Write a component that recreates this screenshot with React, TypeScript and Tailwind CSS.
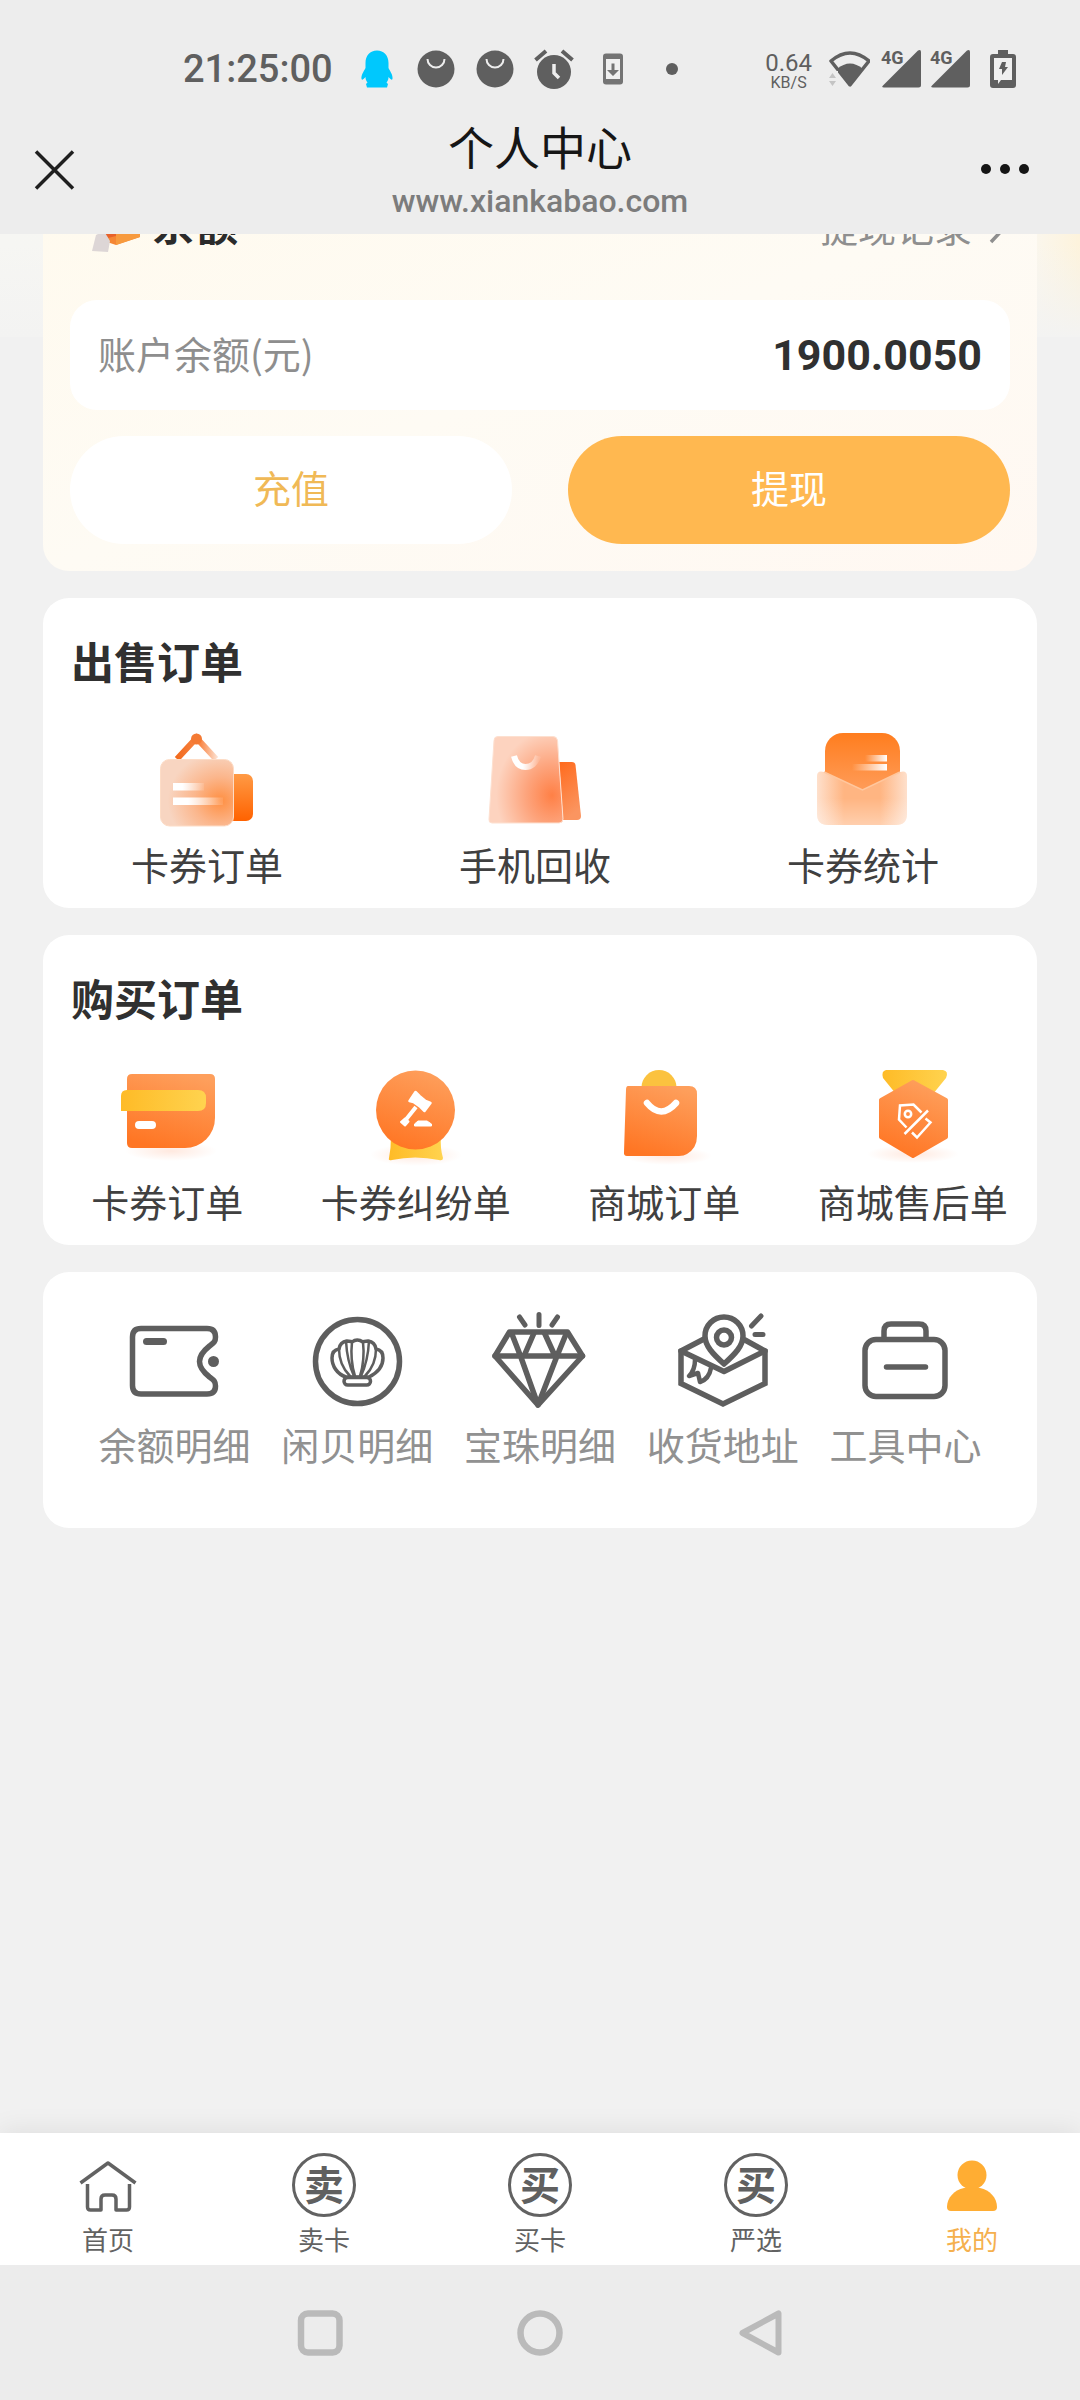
import type { ReactNode } from "react";

const Stop = ({ o, c, a = 1 }: { o: number; c: string; a?: number }) => (
  <stop offset={o} stopColor={c} stopOpacity={a} />
);

const TileSvg = ({ children }: { children: ReactNode }) => (
  <svg viewBox="0 0 96 96" className="size-24 overflow-visible" fill="none" aria-hidden="true">
    {children}
  </svg>
);

/* ---------- sell orders ---------- */

const SignIcon = () => (
  <TileSvg>
    <defs>
      <linearGradient id="sg1" x1="0" y1="0" x2="0" y2="1">
        <Stop o={0} c="#ff9a45" />
        <Stop o={1} c="#ff6200" />
      </linearGradient>
      <radialGradient id="sg2" cx="0.82" cy="0.62" r="0.72">
        <Stop o={0} c="#ff8f42" />
        <Stop o={0.5} c="#fbb68c" />
        <Stop o={1} c="#f8d5c1" />
      </radialGradient>
      <linearGradient id="sg3" gradientUnits="userSpaceOnUse" x1="18" y1="0" x2="58" y2="0">
        <Stop o={0} c="#f26a1d" />
        <Stop o={0.6} c="#f9894a" />
        <Stop o={1} c="#fde0cf" />
      </linearGradient>
      <linearGradient id="sg4">
        <Stop o={0.3} c="#fff" />
        <Stop o={1} c="#fff" a={0.1} />
      </linearGradient>
    </defs>
    <path d="M18 27L37.500 6L57 27" stroke="url(#sg3)" strokeWidth="6" />
    <circle cx="37.500" cy="7" r="5.500" fill="#f47a34" />
    <path d="M70 42h17a7 7 0 0 1 7 7v33a7 7 0 0 1-7 7H70z" fill="url(#sg1)" />
    <rect x="1.500" y="27.500" width="73" height="66.500" rx="9" fill="url(#sg2)" stroke="#fddcc6" />
    <rect x="14" y="51" width="31" height="7.500" fill="url(#sg4)" />
    <rect x="14" y="65.500" width="50" height="7.500" fill="url(#sg4)" />
  </TileSvg>
);

const PhoneBagIcon = () => (
  <TileSvg>
    <defs>
      <linearGradient id="pb1" x1="0" y1="0" x2="0.300" y2="1">
        <Stop o={0} c="#ff6a1c" />
        <Stop o={1} c="#fb9560" />
      </linearGradient>
      <radialGradient id="pb2" cx="0.85" cy="0.68" r="0.75">
        <Stop o={0} c="#ff8046" />
        <Stop o={0.45} c="#fda37b" />
        <Stop o={1} c="#fdd3bf" />
      </radialGradient>
      <linearGradient id="pb3" gradientUnits="userSpaceOnUse" x1="25" y1="0" x2="52" y2="0">
        <Stop o={0.4} c="#fff" />
        <Stop o={1} c="#fff" a={0.1} />
      </linearGradient>
    </defs>
    <path d="M72 30h13q3 0 3.500 3l5.500 51q0 4-4 4H76z" fill="url(#pb1)" />
    <path d="M11 4.500h55q4 0 4.500 4L76 87q0 4-4 4H5q-3.500 0-3-4L7 8.500q0-4 4-4z" fill="url(#pb2)" stroke="#fde0d0" />
    <path d="M27 24c2 8 6 11 11.500 11S49 31 51 24" stroke="url(#pb3)" strokeWidth="6" />
  </TileSvg>
);

const EnvelopeIcon = () => (
  <TileSvg>
    <defs>
      <linearGradient id="en1" x1="0" y1="0" x2="0" y2="1">
        <Stop o={0} c="#ff7d1e" />
        <Stop o={1} c="#ffa468" />
      </linearGradient>
      <linearGradient id="en2">
        <Stop o={0} c="#fee0cc" />
        <Stop o={0.3} c="#ffb582" />
        <Stop o={0.7} c="#ffb582" />
        <Stop o={1} c="#fee0cc" />
      </linearGradient>
      <linearGradient id="en3">
        <Stop o={0} c="#fff" a={0} />
        <Stop o={1} c="#fff" />
      </linearGradient>
      <linearGradient id="en4" x1="0" y1="0" x2="0" y2="1">
        <Stop o={0.5} c="#fff" a={0} />
        <Stop o={1} c="#fff" a={0.35} />
      </linearGradient>
    </defs>
    <rect x="10" y="1" width="75" height="72" rx="18" fill="url(#en1)" />
    <rect x="50" y="23" width="22" height="6.500" fill="url(#en3)" />
    <rect x="37" y="32" width="35" height="6.500" fill="url(#en3)" />
    <path d="M2 44q0-6 7-4l38.500 18L85 40q7-2 7 4v38q0 11-11 11H13Q2 93 2 82z" fill="url(#en2)" />
    <path d="M2 44q0-6 7-4l38.500 18L85 40q7-2 7 4v38q0 11-11 11H13Q2 93 2 82z" fill="url(#en4)" />
    <path d="M9 40l38.500 18L85 40" stroke="#ffc79e" strokeWidth="1.500" />
  </TileSvg>
);

/* ---------- buy orders ---------- */

const BuyDefs = () => (
  <svg width="0" height="0" className="absolute" aria-hidden="true">
    <defs>
      <linearGradient id="or1" x1="0.7" y1="0" x2="0.35" y2="1">
        <Stop o={0} c="#fe9f5c" />
        <Stop o={1} c="#ff7624" />
      </linearGradient>
      <linearGradient id="ye1" x1="0" y1="0" x2="1" y2="0">
        <Stop o={0} c="#febb27" />
        <Stop o={1} c="#ffd34f" />
      </linearGradient>
      <radialGradient id="sh1">
        <Stop o={0} c="#ff9060" a={0.2} />
        <Stop o={1} c="#ff9060" a={0} />
      </radialGradient>
    </defs>
  </svg>
);

const CardIcon = () => (
  <TileSvg>
    <ellipse cx="52" cy="82" rx="46" ry="10" fill="url(#sh1)" />
    <path d="M13 5h78q5 0 5 5v39a30 30 0 0 1-30 30H13q-5 0-5-5V10q0-5 5-5z" fill="url(#or1)" />
    <path d="M8 21h71q8 0 8 8v5q0 8-8 8H2V27q0-6 6-6z" fill="url(#ye1)" />
    <rect x="16" y="52" width="21" height="8" rx="4" fill="#fff" />
  </TileSvg>
);

const GavelIcon = () => (
  <TileSvg>
    <ellipse cx="48" cy="86" rx="46" ry="11" fill="url(#sh1)" />
    <path d="M23 67h50q-1 12 2 22 0 3-4 2-24-5-47 0-4 1-3-2 2-10 2-22z" fill="url(#ye1)" />
    <circle cx="47.500" cy="41" r="39.500" fill="url(#or1)" />
    <g fill="#fff" stroke="#fff" strokeLinejoin="round">
      <path d="M47.500 23l4 4 6 5 5 2-6 8-4-4-7-5-4-1z" strokeWidth="2.500" />
      <path d="M48 38L36 53" strokeWidth="4" />
      <path d="M37 49.500l3.500 3-3.500 4-4-3.500z" strokeWidth="2" />
      <path d="M50 52h9l4.500 3v2H46.500v-2z" strokeWidth="1" />
    </g>
  </TileSvg>
);

const BagIcon = () => (
  <TileSvg>
    <ellipse cx="52" cy="87" rx="44" ry="9" fill="url(#sh1)" />
    <circle cx="43" cy="18.500" r="17.500" fill="#fbc23f" />
    <path d="M12 17h61q8 0 8 8v42q0 12-10 18-3 2-8 2H11q-3.500 0-3-4l2-62q0-4 2-4z" fill="url(#or1)" />
    <path d="M31 34q14 17 29 0" stroke="#fff" strokeWidth="6.500" strokeLinecap="round" />
  </TileSvg>
);

const MedalIcon = () => (
  <TileSvg>
    <ellipse cx="48" cy="85" rx="46" ry="9" fill="url(#sh1)" />
    <path d="M21 1h57q6 1 3 8L68 25H31L18 9q-2-7 3-8z" fill="url(#ye1)" />
    <path
      d="M48 13l33 18v37L48 87 16 68V31z"
      fill="url(#or1)"
      stroke="url(#or1)"
      strokeWidth="4"
      strokeLinejoin="round"
    />
    <g stroke="#fff" strokeWidth="2.500">
      <path d="M41.500 58.500L34 50.500l1-14 13.500-1 8 8" />
      <circle cx="43" cy="45" r="3.200" />
      <path d="M63 41.500L39.500 65" />
      <path d="M60.500 49.500l5 4L52 68.500l-5-5" />
    </g>
  </TileSvg>
);

/* ---------- tools ---------- */

const LineSvg = ({ children }: { children: ReactNode }) => (
  <svg
    viewBox="0 0 96 96"
    className="size-24 overflow-visible"
    fill="none"
    stroke="#5e5e5e"
    strokeWidth="5.500"
    strokeLinejoin="round"
    strokeLinecap="round"
    aria-hidden="true"
  >
    {children}
  </svg>
);

const WalletIcon = () => (
  <LineSvg>
    <path d="M15 16.500h66q8.500 0 8.500 8.500c0 5-2 6-6 9-5 4-10 9-10 15.500s5 11.500 10 15.500c4 3 6 4 6 9q0 8-8.500 8H15q-8.500 0-8.500-8.500v-48.500q0-8.500 8.500-8.500z" />
    <path d="M20.500 29.500h17" strokeWidth="7" />
    <circle cx="87.500" cy="49.500" r="5.500" fill="#5e5e5e" stroke="none" />
  </LineSvg>
);

const ShellIcon = () => (
  <LineSvg>
    <circle cx="48.500" cy="49.500" r="42" />
    <g strokeWidth="3.500">
      <path d="M37 65C28 62 23 54 23 46q0-8 7-9 1-7 8-8 4 0 5 1 5-4 11 0 1-1 5-1 7 1 8 8 7 1 7 9 0 12-14 19z" />
      <rect x="35" y="65.500" width="26.500" height="7.500" rx="3.700" />
      <g strokeWidth="2.500">
        <path d="M30 37q0 16 11 27M67 37q0 16-11 27M37 29q1 20 8 35M60 29q-1 20-8 35M43 30q-2 18 3 34M54 30q2 18-3 34" />
      </g>
    </g>
  </LineSvg>
);

const DiamondIcon = () => (
  <LineSvg>
    <path d="M27.500 5l5.500 8M47 2.500v11M65.500 5L60 13" strokeWidth="5" />
    <path d="M17.500 20h58L90.500 44 46 93 3 44z" />
    <path d="M3 44h87.500M19.500 21L28.500 44 46 93 65 44l9.500-23M42 21l-10 23M52.500 21l10.500 23" />
  </LineSvg>
);

const AddressIcon = () => (
  <LineSvg>
    <path d="M29 27L6 39v32.500L48 92l42-20.500V39L70 28" strokeLinejoin="miter" />
    <path d="M6 39l43 20.500L90 39" />
    <path d="M49 52C38 42 30 34 30 24a19 19 0 0 1 38 0c0 10-8 18-19 28z" fill="#fff" />
    <circle cx="49" cy="25.500" r="7.500" />
    <path d="M20 48q0 10-6 16l9-3 2 9q9-3 11-14" strokeWidth="4.500" />
    <path d="M86 4L76.500 14M80 22.500h8" strokeWidth="5" />
  </LineSvg>
);

const ToolboxIcon = () => (
  <LineSvg>
    <rect x="7" y="27.500" width="80" height="57" rx="11" />
    <path d="M26 26.500V19q0-7 7-7h28q7 0 7 7v7.500M28.500 55h39" />
  </LineSvg>
);

/* ---------- tab bar ---------- */

const HomeIcon = () => (
  <svg viewBox="0 0 64 64" className="size-16" fill="none" stroke="#626262" strokeWidth="3.500" strokeLinejoin="round" aria-hidden="true">
    <path d="M4.500 30L32 10l27.500 20" />
    <path d="M11.500 31v23q0 3 3 3h10.500V46q0-4 4-4h7q4 0 4 4v11h10.500q3 0 3-3V31" />
  </svg>
);

const MineIcon = () => (
  <svg viewBox="0 0 64 64" className="size-16" fill="#ffad33" aria-hidden="true">
    <ellipse cx="32" cy="22" rx="14.500" ry="14.500" />
    <path d="M24 35h16c10 2 17 10 17 19q0 4-4 4H11q-4 0-4-4c0-9 7-17 17-19z" />
  </svg>
);

const RoundGlyph = ({ char }: { char: string }) => (
  <span
    className="flex size-16 items-center justify-center rounded-full border-3 border-[#626262] pb-1 text-[40px] leading-none font-bold text-[#606060]"
    aria-hidden="true"
  >
    {char}
  </span>
);

/* ---------- status bar ---------- */

const Smiley = () => (
  <svg viewBox="0 0 38 38" className="size-[38px]" fill="none" aria-hidden="true">
    <circle cx="19" cy="19" r="18.500" fill="#5f5f5f" />
    <path d="M10.500 9a8.500 8.500 0 0 0 17 0" stroke="#eee" strokeWidth="2" />
  </svg>
);

const Signal = () => (
  <span className="relative block h-[38px] w-[40px]">
    <svg viewBox="0 0 40 38" className="size-full" fill="#5f5f5f" aria-hidden="true">
      <path d="M37 0.500q3-1.500 3 1.500v33q0 2.500-2.500 2.500H3q-3 0-1-2z" />
      <path d="M0 0h22v15H0z" fill="#ededed" />
    </svg>
    <span className="absolute -top-px left-0 text-[18px] leading-none font-bold">4G</span>
  </span>
);

const StatusBar = () => (
  <div className="flex h-28 items-center justify-between pr-16 pl-[183px] font-[Roboto] text-[#5f5f5f]">
    <div className="flex items-center gap-[21px] pt-[26px]">
      <span className="mr-1 text-[38px] leading-none font-medium">21:25:00</span>
      <svg viewBox="0 0 38 38" className="size-[38px]" fill="#00c8fd" aria-hidden="true">
        <path d="M19 0.500c7 0 11.500 5 11.500 12.500v5c2 4 4.500 7 4 11-1 2-3-1-4-2 0 3-1 4-2 5.500l1.500 1.500-1 3.500H9l-1-3.500 1.500-1.500c-1-1.500-2-2.500-2-5.500-1 1-3 4-4 2-.5-4 2-7 4-11v-5C7.500 5.500 12 .5 19 .5z" />
      </svg>
      <Smiley />
      <Smiley />
      <svg viewBox="0 0 38 38" className="size-[38px] overflow-visible" fill="none" aria-hidden="true">
        <circle cx="19" cy="22" r="17" fill="#5f5f5f" />
        <path d="M0.500 10L11 1M27 1l10.500 9" stroke="#5f5f5f" strokeWidth="4" />
        <path d="M19 14v9l5 5" stroke="#eee" strokeWidth="3.500" />
      </svg>
      <svg viewBox="0 0 38 38" className="size-[38px]" fill="none" aria-hidden="true">
        <rect x="9" y="3.500" width="20" height="31" rx="3" fill="#747474" />
        <path d="M12 9h14v20H12z" fill="#f0f0f0" />
        <path d="M17.500 13.500h3V20h4.500l-6 6-6-6h4.500z" fill="#747474" />
      </svg>
      <svg viewBox="0 0 38 38" className="size-[38px]" aria-hidden="true">
        <circle cx="19" cy="19" r="6" fill="#5f5f5f" />
      </svg>
    </div>
    <div className="flex items-center pt-[26px]">
      <span className="mr-4 flex flex-col items-center pt-1">
        <span className="text-[24px] leading-6">0.64</span>
        <span className="text-base leading-4">KB/S</span>
      </span>
      <svg viewBox="0 0 42 38" className="mr-[11px] h-[38px] w-[42px]" fill="none" aria-hidden="true">
        <path d="M3 11Q22-5 41 11L22 35z" stroke="#5f5f5f" strokeWidth="3.500" strokeLinejoin="round" />
        <path d="M9 19q13-11 26 0L22 36z" fill="#5f5f5f" />
        <path d="M0 21h10v17H0z" fill="#ededed" />
        <path d="M1 28h7l-3.500-5zM1 31h7l-3.500 5z" fill="#c4c4c4" />
      </svg>
      <span className="mr-[9px]">
        <Signal />
      </span>
      <span className="mr-5">
        <Signal />
      </span>
      <svg viewBox="0 0 26 38" className="h-[38px] w-[26px]" aria-hidden="true">
        <path d="M8 0h10v4h5q3 0 3 3v28q0 3-3 3H3q-3 0-3-3V7q0-3 3-3h5z" fill="#5f5f5f" />
        <path d="M4 8h18v22H11l-3 4v-4H4z" fill="#f0f0f0" />
        <path d="M12 12h4l-1 5h3l-6 8v-6H9z" fill="#5f5f5f" />
      </svg>
    </div>
  </div>
);

const Tile = ({ icon, label }: { icon: ReactNode; label: string }) => (
  <a href="#" className="flex min-w-0 flex-1 flex-col items-center gap-2 text-[38px] leading-[56px] whitespace-nowrap text-[#404040]">
    {icon}
    {label}
  </a>
);

const LineTile = ({ icon, label }: { icon: ReactNode; label: string }) => (
  <a href="#" className="flex min-w-0 flex-1 flex-col items-center gap-2 text-[38px] leading-[56px] whitespace-nowrap text-[#919191]">
    {icon}
    {label}
  </a>
);

const tabs = [
  { label: "首页", icon: <HomeIcon /> },
  { label: "卖卡", icon: <RoundGlyph char="卖" /> },
  { label: "买卡", icon: <RoundGlyph char="买" /> },
  { label: "严选", icon: <RoundGlyph char="买" /> },
];

export default function App() {
  return (
    <div className="flex min-h-screen flex-col bg-[#f1f1f1] font-['Noto_Sans_CJK_SC',sans-serif]">
      <header className="relative z-10 bg-[#ededed]">
        <StatusBar />
        <div className="flex h-[122px] items-start justify-between px-8">
          <button type="button" aria-label="关闭" className="mt-9 w-[68px]">
            <svg viewBox="0 0 44 44" className="size-11" stroke="#1f1f1f" strokeWidth="3.500" aria-hidden="true">
              <path d="M4 3.500l37 37M41 3.500L4 40.500" />
            </svg>
          </button>
          <div className="flex flex-col items-center gap-[7px]">
            <h1 className="text-[46px] leading-[66px] text-[#161616]">个人中心</h1>
            <p className="font-[Roboto] text-[32px] leading-8 font-medium text-[#7c7c7c]">www.xiankabao.com</p>
          </div>
          <button type="button" aria-label="更多" className="mt-9 w-[68px]">
            <svg viewBox="0 0 52 44" className="h-11 w-[52px]" fill="#151515" aria-hidden="true">
              <circle cx="6" cy="21" r="5" />
              <circle cx="25" cy="21" r="5" />
              <circle cx="44" cy="21" r="5" />
            </svg>
          </button>
        </div>
      </header>

      <main className="flex flex-1 flex-col gap-[27px] overflow-hidden bg-[linear-gradient(to_bottom,rgba(241,241,241,0)_10%,#f3f3f2),linear-gradient(to_right,#f6f6f3,#faf7f0_95%,#fdf3dc)] bg-[length:100%_103px] bg-no-repeat px-[43px]">
        <section className="-mt-12 rounded-[26px] bg-[linear-gradient(to_bottom_right,#fffaee,#fefbf4_50%,#fff8f2)] px-[27px] pb-[27px]">
          <div className="flex h-[114px] items-start justify-between pt-1">
            <h2 className="flex items-center gap-3 pl-5 text-[43px] leading-[64px] font-bold text-[#2b2b2b]">
              <svg viewBox="0 0 50 54" className="mt-2 h-[54px] w-[50px]" aria-hidden="true">
                <path d="M12 12l28-4 10 6v24l-24 8-12-4z" fill="#f58634" />
                <path d="M26 22l24-6v22l-24 8z" fill="#f79a3e" />
                <path d="M6 24l20-1v14l-8 2z" fill="#e8622a" />
                <path d="M6 36l8-4 6 10-2 11-16-1z" fill="#ddd6d6" />
              </svg>
              余额
            </h2>
            <a href="#" className="flex items-center gap-4 text-[38px] leading-[72px] text-[#8f8f8f]">
              提现记录
              <svg viewBox="0 0 22 36" className="h-9 w-[22px]" fill="none" stroke="#8f8f8f" strokeWidth="3.500" aria-hidden="true">
                <path d="M3 2l15 16L3 34" />
              </svg>
            </a>
          </div>
          <div className="flex h-[110px] items-center justify-between rounded-[27px] bg-white px-7">
            <span className="pb-1 text-[38px] leading-[56px] text-[#8e8e8e]">账户余额(元)</span>
            <span className="font-[Roboto] text-[43px] leading-[56px] font-bold text-[#303030]">1900.0050</span>
          </div>
          <div className="mt-[26px] flex gap-14 text-[38px]">
            <button type="button" className="h-[108px] flex-1 rounded-full bg-white pb-2 text-[#f0b956]">
              充值
            </button>
            <button type="button" className="h-[108px] flex-1 rounded-full bg-[#ffb850] pb-2 text-white">
              提现
            </button>
          </div>
        </section>

        <section className="rounded-[26px] bg-white pt-[30px] pb-4">
          <h2 className="px-7 text-[43px] leading-[64px] font-bold text-[#303030]">出售订单</h2>
          <div className="mt-10 flex pr-[10px]">
            <Tile icon={<SignIcon />} label="卡券订单" />
            <Tile icon={<PhoneBagIcon />} label="手机回收" />
            <Tile icon={<EnvelopeIcon />} label="卡券统计" />
          </div>
        </section>

        <section className="relative rounded-[26px] bg-white pt-[30px] pb-4">
          <BuyDefs />
          <h2 className="px-7 text-[43px] leading-[64px] font-bold text-[#303030]">购买订单</h2>
          <div className="mt-10 flex">
            <Tile icon={<CardIcon />} label="卡券订单" />
            <Tile icon={<GavelIcon />} label="卡券纠纷单" />
            <Tile icon={<BagIcon />} label="商城订单" />
            <Tile icon={<MedalIcon />} label="商城售后单" />
          </div>
        </section>

        <section className="flex rounded-[26px] bg-white px-10 pt-10 pb-14">
          <LineTile icon={<WalletIcon />} label="余额明细" />
          <LineTile icon={<ShellIcon />} label="闲贝明细" />
          <LineTile icon={<DiamondIcon />} label="宝珠明细" />
          <LineTile icon={<AddressIcon />} label="收货地址" />
          <LineTile icon={<ToolboxIcon />} label="工具中心" />
        </section>
      </main>

      <nav className="flex bg-white pt-5 pb-2 shadow-[0_-4px_24px_rgba(0,0,0,0.07)]">
        {tabs.map((tab) => (
          <a key={tab.label} href="#" className="flex flex-1 flex-col items-center gap-1 text-[26px] leading-9 text-[#626262]">
            {tab.icon}
            {tab.label}
          </a>
        ))}
        <a href="#" aria-current="page" className="flex flex-1 flex-col items-center gap-1 text-[26px] leading-9 text-[#f5b04e]">
          <MineIcon />
          我的
        </a>
      </nav>

      <div className="flex h-[135px] items-center justify-center gap-[172px] bg-[#ececec]">
        <button type="button" aria-label="最近任务">
          <svg viewBox="0 0 48 48" className="size-12" fill="none" stroke="#bababa" strokeWidth="6.500" aria-hidden="true">
            <rect x="5" y="4.500" width="38.500" height="39" rx="7" />
          </svg>
        </button>
        <button type="button" aria-label="主屏幕">
          <svg viewBox="0 0 48 48" className="size-12" fill="none" stroke="#bababa" strokeWidth="6.500" aria-hidden="true">
            <circle cx="24" cy="24" r="19.500" />
          </svg>
        </button>
        <button type="button" aria-label="返回">
          <svg viewBox="0 0 48 48" className="size-12" fill="none" stroke="#bababa" strokeWidth="6" strokeLinejoin="round" aria-hidden="true">
            <path d="M42.500 4.500v39L6.500 24z" />
          </svg>
        </button>
      </div>
    </div>
  );
}
